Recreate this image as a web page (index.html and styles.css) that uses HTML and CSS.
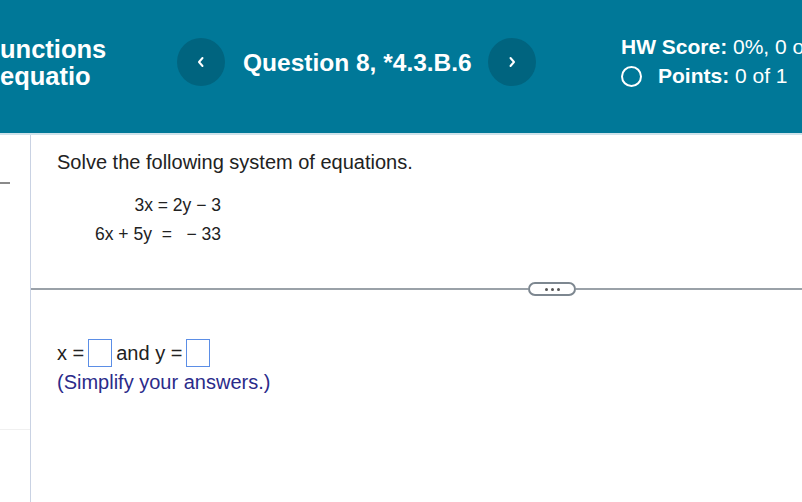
FILE: index.html
```html
<!DOCTYPE html>
<html>
<head>
<meta charset="utf-8">
<link rel="stylesheet" href="styles.css">
</head>
<body>
<header class="topbar">
  <div class="title">
    <div>unctions</div>
    <div>equatio</div>
  </div>
  <div class="nav">
    <button class="circle-btn" aria-label="Previous">
      <svg width="10" height="12" viewBox="0 0 10 12"><path d="M6.5 2 L3 6 L6.5 10" fill="none" stroke="#fff" stroke-width="2" stroke-linecap="round" stroke-linejoin="round"/></svg>
    </button>
    <div class="qtitle">Question 8, *4.3.B.6</div>
    <button class="circle-btn" aria-label="Next">
      <svg width="10" height="12" viewBox="0 0 10 12"><path d="M3.5 2 L7 6 L3.5 10" fill="none" stroke="#fff" stroke-width="2" stroke-linecap="round" stroke-linejoin="round"/></svg>
    </button>
  </div>
  <div class="score">
    <div class="score-line"><b>HW Score:</b> 0%, 0 of</div>
    <div class="points-line"><span class="ring"></span><b>Points:</b>&nbsp;0 of 1</div>
  </div>
</header>
<div class="main">
  <aside class="side">
    <div class="dash"></div>
    <div class="faint"></div>
  </aside>
  <section class="content">
    <p class="prompt">Solve the following system of equations.</p>
    <div class="eqs">
      <div class="eqrow">3x = 2y − 3</div>
      <div class="eqrow">6x + 5y  =   − 33</div>
    </div>
    <div class="sep">
      <div class="seg seg-left"></div>
      <div class="pill"><span></span><span></span><span></span></div>
      <div class="seg seg-right"></div>
    </div>
    <div class="answer">
      <span>x =</span><span class="box"></span><span>and y =</span><span class="box"></span>
    </div>
    <div class="hint">(Simplify your answers.)</div>
  </section>
</div>
</body>
</html>
```
FILE: styles.css
```css
html, body {
  margin: 0;
  padding: 0;
  background: #fff;
  width: 802px;
  height: 502px;
  overflow: hidden;
}
body {
  font-family: "Liberation Sans", Arial, sans-serif;
  color: #222;
}
.topbar {
  height: 123px;
  padding-bottom: 10px;
  background: #007898;
  border-bottom: 2px solid #cfe2ea;
  display: flex;
  align-items: center;
  color: #fff;
  box-sizing: content-box;
  overflow: hidden;
}
.title {
  width: 177px;
  flex: none;
  font-size: 25.5px;
  font-weight: bold;
  line-height: 27px;
  margin-top: 2px;
  white-space: nowrap;
}
.nav {
  display: flex;
  align-items: center;
  width: 444px;
  flex: none;
}
.circle-btn {
  width: 48px;
  height: 48px;
  border-radius: 50%;
  border: none;
  background: #00647f;
  display: flex;
  align-items: center;
  justify-content: center;
  padding: 0;
  flex: none;
}
.qtitle {
  font-size: 24.5px;
  font-weight: bold;
  margin: 2px 0 0 18px;
  width: 245px;
  white-space: nowrap;
}
.score {
  font-size: 21px;
  white-space: nowrap;
  margin-top: 1px;
}
.score-line {
  line-height: 24px;
}
.points-line {
  display: flex;
  align-items: center;
  line-height: 26px;
  margin-top: 4px;
}
.ring {
  width: 17px;
  height: 17px;
  border: 2.5px solid #fff;
  border-radius: 50%;
  margin-right: 16px;
  flex: none;
}
.main {
  display: flex;
  height: 367px;
}
.side {
  width: 30px;
  border-right: 1px solid #c9d2e3;
  flex: none;
}
.dash {
  width: 10px;
  height: 2px;
  background: #8a8a8a;
  margin-top: 47px;
}
.faint {
  height: 1px;
  background: #f0f0f0;
  margin-top: 245px;
}
.content {
  flex: 1;
  padding-left: 26px;
}
.prompt {
  margin: 16px 0 0 0;
  font-size: 20px;
  line-height: 23px;
}
.eqs {
  width: 164px;
  margin: 21px 0 0 0;
  font-size: 17.5px;
  text-align: right;
}
.eqrow {
  height: 29px;
  line-height: 20px;
  white-space: pre;
}
.sep {
  display: flex;
  align-items: center;
  margin: 29px 0 0 -26px;
  height: 14px;
}
.seg {
  height: 2px;
  background: #9aa1a8;
}
.seg-left {
  width: 497px;
}
.seg-right {
  flex: 1;
}
.pill {
  width: 44px;
  height: 10px;
  border: 2px solid #7d8790;
  border-radius: 7px;
  background: #fff;
  display: flex;
  align-items: center;
  justify-content: center;
  gap: 3px;
}
.pill span {
  width: 3px;
  height: 3px;
  border-radius: 50%;
  background: #555;
}
.answer {
  display: flex;
  align-items: center;
  margin-top: 43px;
  font-size: 20px;
  gap: 3px;
}
.box {
  width: 22px;
  height: 26px;
  border: 1.5px solid #5b8ee6;
  margin: 0 1px;
}
.hint {
  color: #2b2b8a;
  font-size: 20px;
  line-height: 23px;
  margin-top: 4px;
}
```
